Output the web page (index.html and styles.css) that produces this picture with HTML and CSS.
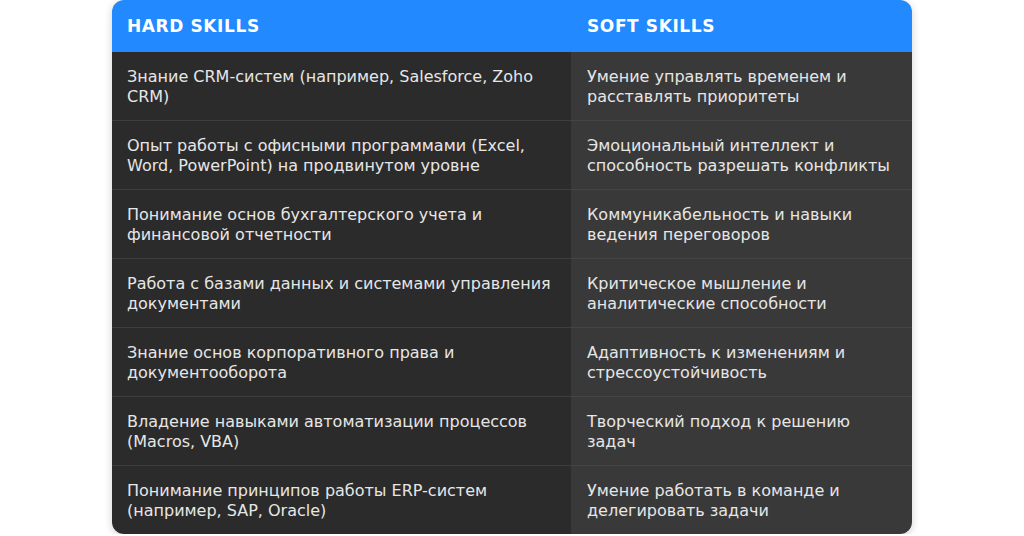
FILE: index.html
```html
<!DOCTYPE html>
<html lang="ru">
<head>
<meta charset="utf-8">
<link rel="stylesheet" href="styles.css">
</head>
<body>
<div class="wrap">
  <table class="skills">
    <thead>
      <tr><th class="c1">Hard Skills</th><th class="c2">Soft Skills</th></tr>
    </thead>
    <tbody>
      <tr><td class="c1">Знание CRM-систем (например, Salesforce, Zoho CRM)</td><td class="c2">Умение управлять временем и расставлять приоритеты</td></tr>
      <tr><td class="c1">Опыт работы с офисными программами (Excel, Word, PowerPoint) на продвинутом уровне</td><td class="c2">Эмоциональный интеллект и способность разрешать конфликты</td></tr>
      <tr><td class="c1">Понимание основ бухгалтерского учета и финансовой отчетности</td><td class="c2">Коммуникабельность и навыки ведения переговоров</td></tr>
      <tr><td class="c1">Работа с базами данных и системами управления документами</td><td class="c2">Критическое мышление и аналитические способности</td></tr>
      <tr><td class="c1">Знание основ корпоративного права и документооборота</td><td class="c2">Адаптивность к изменениям и стрессоустойчивость</td></tr>
      <tr><td class="c1">Владение навыками автоматизации процессов (Macros, VBA)</td><td class="c2">Творческий подход к решению задач</td></tr>
      <tr><td class="c1">Понимание принципов работы ERP-систем (например, SAP, Oracle)</td><td class="c2">Умение работать в команде и делегировать задачи</td></tr>
    </tbody>
  </table>
</div>
</body>
</html>
```
FILE: styles.css
```css
html, body {
  margin: 0;
  padding: 0;
  background: #ffffff;
}
body {
  font-family: "DejaVu Sans", sans-serif;
}
.wrap {
  display: flex;
  justify-content: center;
}
.skills {
  width: 800px;
  border-collapse: separate;
  border-spacing: 0;
  border-radius: 12px;
  overflow: hidden;
  box-shadow: 0 2px 8px rgba(0, 0, 0, 0.18);
}
.skills th {
  background: #2389ff;
  color: #ffffff;
  text-align: left;
  text-transform: uppercase;
  font-size: 17px;
  font-weight: bold;
  line-height: 20px;
  padding: 16px 15px 16px 15px;
  letter-spacing: 0.6px;
}
.skills th.c2,
.skills td.c2 {
  padding-left: 16px;
}
.skills td {
  color: #e6e6e6;
  font-size: 16px;
  line-height: 20px;
  padding: 15px 15px 13px 15px;
  border-bottom: 1px solid #3d3d3d;
  vertical-align: top;
}
.skills td.c1 {
  width: 429px;
  background: #2b2b2b;
}
.skills td.c2 {
  background: #393939;
  border-bottom-color: #444444;
}
.skills tbody tr:last-child td {
  border-bottom: none;
}
```
